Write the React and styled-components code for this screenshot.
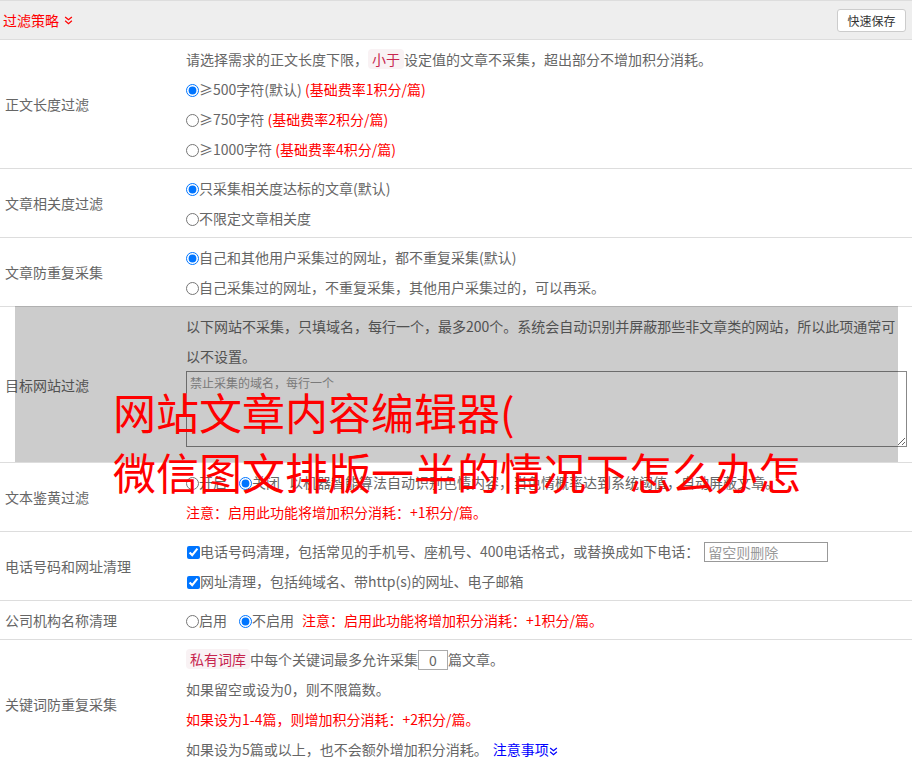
import React from 'react';
import styled, { createGlobalStyle } from 'styled-components';

const Global = createGlobalStyle`
  html, body { margin: 0; padding: 0; background: #fff; }
  body {
    font-family: "Noto Sans CJK SC", "Microsoft YaHei", sans-serif;
    font-size: 14px;
    color: #666;
  }
  * { box-sizing: border-box; }
`;

const Panel = styled.div`
  position: relative;
  width: 912px;
`;

const Header = styled.div`
  display: flex;
  align-items: center;
  justify-content: space-between;
  height: 40px;
  background: #eee;
  border-top: 1px solid #ddd;
  border-bottom: 1px solid #ddd;
  padding: 0 6px 0 3px;
`;

const Title = styled.div`
  display: flex;
  align-items: center;
  gap: 5px;
  color: #f00;
  font-size: 14px;
`;

const SaveButton = styled.button`
  font-family: inherit;
  font-size: 12px;
  color: #333;
  background: #fff;
  border: 1px solid #ccc;
  border-radius: 3px;
  width: 69px;
  height: 23px;
  padding: 0;
`;

const Row = styled.div`
  position: relative;
  display: grid;
  grid-template-columns: 181px 1fr;
  border-bottom: 1px solid #ddd;
`;

const Label = styled.div`
  display: flex;
  align-items: center;
  padding: 0 5px;
  color: #666;
  font-size: 14px;
`;

const Content = styled.div`
  padding: ${p => (p.$tight ? '4px 5px 15px' : '4px 5px')};
  min-width: 0;
`;

const Line = styled.div`
  line-height: 30px;
  white-space: ${p => (p.$wrap ? 'normal' : 'nowrap')};
  color: ${p => (p.$red ? '#f00' : '#666')};
`;

const Red = styled.span`
  color: #f00;
  margin-left: ${p => p.$ml || 0}px;
`;

const Option = styled.label`
  margin-right: ${p => p.$gap || 0}px;
`;

const Check = styled.input`
  margin: 0 0 0 ${p => p.$ml || 0}px;
  width: 13px;
  height: 13px;
  vertical-align: -2px;
`;

const Badge = styled.span`
  display: inline-block;
  padding: 0 4px;
  line-height: 20px;
  background: #f9f2f4;
  color: #c7254e;
  border-radius: 4px;
`;

const NumInput = styled.input`
  width: 30px;
  height: 20px;
  border: 1px solid #aaa;
  padding: 0;
  font-family: inherit;
  font-size: 14px;
  color: #666;
  text-align: center;
  vertical-align: middle;
  margin-top: -3px;
`;

const PhoneInput = styled.input`
  width: 124px;
  height: 20px;
  border: 1px solid #999;
  padding: 0 3px;
  margin-left: 5px;
  font-family: inherit;
  font-size: 14px;
  color: #666;
  vertical-align: middle;
  margin-top: -3px;
  &::placeholder { color: #999; }
`;

const Area = styled.textarea`
  display: block;
  width: 100%;
  height: 76px;
  border: 1px solid #888;
  padding: 2px 3px;
  font-family: inherit;
  font-size: 12px;
  background: #fff;
  &::placeholder { color: #999; }
`;

const Link = styled.a`
  color: #00f;
  margin-left: 5px;
  text-decoration: none;
`;

const Shade = styled.div`
  position: absolute;
  top: -1px;
  left: 15px;
  right: 14px;
  bottom: 0;
  background: rgba(0, 0, 0, 0.2);
  pointer-events: none;
`;

const Headline = styled.div`
  position: absolute;
  left: 113px;
  top: 381px;
  font-size: 43px;
  line-height: 60px;
  color: #f00;
  white-space: nowrap;
  z-index: 2;
  pointer-events: none;
`;

const Chevrons = ({ color, size = 9 }) => (
  <svg width={size} height={size} viewBox="0 0 8 8" style={{ verticalAlign: 'middle' }}>
    <path d="M1 0.8 L4 3.3 L7 0.8 M1 4.3 L4 6.8 L7 4.3" fill="none" stroke={color} strokeWidth="1.1" />
  </svg>
);

const Radio = ({ checked, name, ml }) => (
  <Check type="radio" name={name} defaultChecked={checked} $ml={ml} />
);

export default function App() {
  return (
    <>
      <Global />
      <Panel>
        <Header>
          <Title>
            过滤策略 <Chevrons color="#f00" />
          </Title>
          <SaveButton>快速保存</SaveButton>
        </Header>

        <Row>
          <Label>正文长度过滤</Label>
          <Content>
            <Line>
              请选择需求的正文长度下限，<Badge>小于</Badge>设定值的文章不采集，超出部分不增加积分消耗。
            </Line>
            <Line>
              <Option><Radio name="len" checked />≥500字符(默认)</Option> <Red>(基础费率1积分/篇)</Red>
            </Line>
            <Line>
              <Option><Radio name="len" />≥750字符</Option> <Red>(基础费率2积分/篇)</Red>
            </Line>
            <Line>
              <Option><Radio name="len" />≥1000字符</Option> <Red>(基础费率4积分/篇)</Red>
            </Line>
          </Content>
        </Row>

        <Row>
          <Label>文章相关度过滤</Label>
          <Content>
            <Line><Option><Radio name="rel" checked />只采集相关度达标的文章(默认)</Option></Line>
            <Line><Option><Radio name="rel" />不限定文章相关度</Option></Line>
          </Content>
        </Row>

        <Row>
          <Label>文章防重复采集</Label>
          <Content>
            <Line><Option><Radio name="dup" checked />自己和其他用户采集过的网址，都不重复采集(默认)</Option></Line>
            <Line><Option><Radio name="dup" />自己采集过的网址，不重复采集，其他用户采集过的，可以再采。</Option></Line>
          </Content>
        </Row>

        <Row>
          <Label>目标网站过滤</Label>
          <Content $tight>
            <Line $wrap>
              以下网站不采集，只填域名，每行一个，最多200个。系统会自动识别并屏蔽那些非文章类的网站，所以此项通常可以不设置。
            </Line>
            <Area placeholder="禁止采集的域名，每行一个" />
          </Content>
          <Shade />
        </Row>

        <Row>
          <Label>文本鉴黄过滤</Label>
          <Content>
            <Line>
              <Option $gap={12}><Radio name="porn" />开启</Option>
              <Option $gap={9}><Radio name="porn" checked />关闭</Option>
              以机器智能算法自动识别色情内容，当色情概率达到系统阈值，自动屏蔽文章。
            </Line>
            <Line $red>注意：启用此功能将增加积分消耗：+1积分/篇。</Line>
          </Content>
        </Row>

        <Row>
          <Label>电话号码和网址清理</Label>
          <Content>
            <Line>
              <Option>
                <Check type="checkbox" defaultChecked $ml={1} />电话号码清理，包括常见的手机号、座机号、400电话格式，或替换成如下电话：
              </Option>
              <PhoneInput placeholder="留空则删除" />
            </Line>
            <Line>
              <Option>
                <Check type="checkbox" defaultChecked $ml={1} />网址清理，包括纯域名、带http(s)的网址、电子邮箱
              </Option>
            </Line>
          </Content>
        </Row>

        <Row>
          <Label>公司机构名称清理</Label>
          <Content>
            <Line>
              <Option $gap={12}><Radio name="org" />启用</Option>
              <Option><Radio name="org" checked />不启用</Option>
              <Red $ml={8}>注意：启用此功能将增加积分消耗：+1积分/篇。</Red>
            </Line>
          </Content>
        </Row>

        <Row>
          <Label>关键词防重复采集</Label>
          <Content>
            <Line>
              <Badge>私有词库</Badge>中每个关键词最多允许采集<NumInput defaultValue="0" />篇文章。
            </Line>
            <Line>如果留空或设为0，则不限篇数。</Line>
            <Line $red>如果设为1-4篇，则增加积分消耗：+2积分/篇。</Line>
            <Line>
              如果设为5篇或以上，也不会额外增加积分消耗。
              <Link href="#">注意事项<Chevrons color="#00f" /></Link>
            </Line>
          </Content>
        </Row>

        <Headline>
          <div>网站文章内容编辑器(</div>
          <div>微信图文排版一半的情况下怎么办怎</div>
        </Headline>
      </Panel>
    </>
  );
}
